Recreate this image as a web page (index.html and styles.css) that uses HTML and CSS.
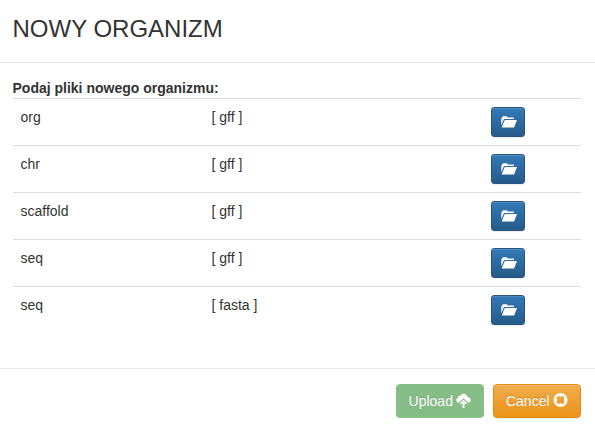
FILE: index.html
```
<!DOCTYPE html>
<html lang="pl">
<head>
<meta charset="utf-8">
<title>Nowy organizm</title>
<link rel="stylesheet" href="styles.css">
</head>
<body>
<svg class="defs" width="0" height="0" aria-hidden="true">
  <symbol id="folder" viewBox="0 0 16 12">
    <path d="M.3 9.500V2.500L1.400 1.500V1Q1.400.3 2 .3h3.600q.5 0 .7.5l.3.700h5.600q.7 0 .7.7V3H3.600q-.6 0-.9.6z"/>
    <path d="M4.300 4h11.200q.5 0 .3.500l-2.500 6.500q-.2.500-.7.500H1.200q-.5 0-.3-.5l2.600-6.500q.2-.5.8-.5z"/>
  </symbol>
  <symbol id="upload" viewBox="0 0 15 14">
    <path d="M2.900 8.800A2.500 2.500 0 0 1 1.800 4 2.200 2.200 0 0 1 4.300 1.900 3.700 3.700 0 0 1 11.300 2.900 3 3 0 0 1 12.300 8.800L7.500 4.200z"/>
    <path d="M7.500 5.800l4 4H8.500V14h-2V9.800h-3z"/>
  </symbol>
  <symbol id="remove" viewBox="0 0 14 14">
    <path fill-rule="evenodd" d="M7 0a7 7 0 1 1 0 14A7 7 0 0 1 7 0zM5 2.800L2.800 5 3.900 7 2.800 9 5 11.200 7 10.100 9 11.200 11.200 9 10.100 7 11.200 5 9 2.800 7 3.900z"/>
  </symbol>
</svg>
<div class="modal">
  <header class="modal-header"><h4>NOWY ORGANIZM</h4></header>
  <main class="modal-body">
    <label>Podaj pliki nowego organizmu:</label>
    <div class="row"><span>org</span><span>[ gff ]</span><button class="btn btn-file" aria-label="org"><svg><use href="#folder"/></svg></button></div>
    <div class="row"><span>chr</span><span>[ gff ]</span><button class="btn btn-file" aria-label="chr"><svg><use href="#folder"/></svg></button></div>
    <div class="row"><span>scaffold</span><span>[ gff ]</span><button class="btn btn-file" aria-label="scaffold"><svg><use href="#folder"/></svg></button></div>
    <div class="row"><span>seq</span><span>[ gff ]</span><button class="btn btn-file" aria-label="seq gff"><svg><use href="#folder"/></svg></button></div>
    <div class="row"><span>seq</span><span>[ fasta ]</span><button class="btn btn-file" aria-label="seq fasta"><svg><use href="#folder"/></svg></button></div>
  </main>
  <footer class="modal-footer">
    <button class="btn btn-upload" disabled>Upload <svg><use href="#upload"/></svg></button>
    <button class="btn btn-cancel">Cancel <svg><use href="#remove"/></svg></button>
  </footer>
</div>
</body>
</html>
```
FILE: styles.css
```
* {
  box-sizing: border-box;
}

body {
  margin: 0;
  background: #fff;
  color: #333;
  font: 14px/20px "Liberation Sans", Arial, sans-serif;
  overflow: hidden;
}

.defs {
  display: block;
}

.modal-header {
  height: 63px;
  padding: 12px 12.5px 0;
  border-bottom: 1px solid #e5e5e5;
}

.modal-header h4 {
  margin: 0;
  font-size: 24px;
  font-weight: 400;
  line-height: 34px;
}

.modal-body {
  padding: 15px 14px 35px 12.5px;
}

.modal-body label {
  display: block;
  font-weight: 700;
}

.row {
  display: grid;
  grid-template-columns: 191px 279.5px 1fr;
  height: 47px;
  padding: 8px;
  border-top: 1px solid #ddd;
}

.btn {
  display: flex;
  align-items: center;
  justify-content: center;
  padding: 0;
  border: 1px solid;
  border-radius: 4px;
  color: #fff;
  font: inherit;
  text-shadow: 0 -1px 0 rgba(0, 0, 0, .2);
  box-shadow: inset 0 1px 0 rgba(255, 255, 255, .15), 0 1px 1px rgba(0, 0, 0, .075);
}

.btn svg {
  width: 15px;
  height: 14px;
  margin-left: 3.5px;
  fill: currentColor;
}

.btn-file {
  width: 34px;
  height: 30px;
  border-color: #245580;
  border-radius: 3px;
  background: linear-gradient(#337ab7, #265a88);
}

.btn-file svg {
  width: 16px;
  height: 12px;
  margin: 0 0 1px 1px;
}

.modal-footer {
  display: flex;
  justify-content: flex-end;
  gap: 9px;
  padding: 15px 14px 13px;
  border-top: 1px solid #e5e5e5;
}

.modal-footer .btn {
  width: 88px;
  height: 34px;
}

.btn-upload {
  border-color: #86be86;
  background: #86bc86;
  box-shadow: none;
  text-shadow: 0 -1px 0 rgba(0, 0, 0, .13);
}

.btn-cancel {
  border-color: #e38d13;
  background: linear-gradient(#f0ad4e, #eb9316);
}

.btn-cancel svg {
  margin-bottom: 2px;
}
```
